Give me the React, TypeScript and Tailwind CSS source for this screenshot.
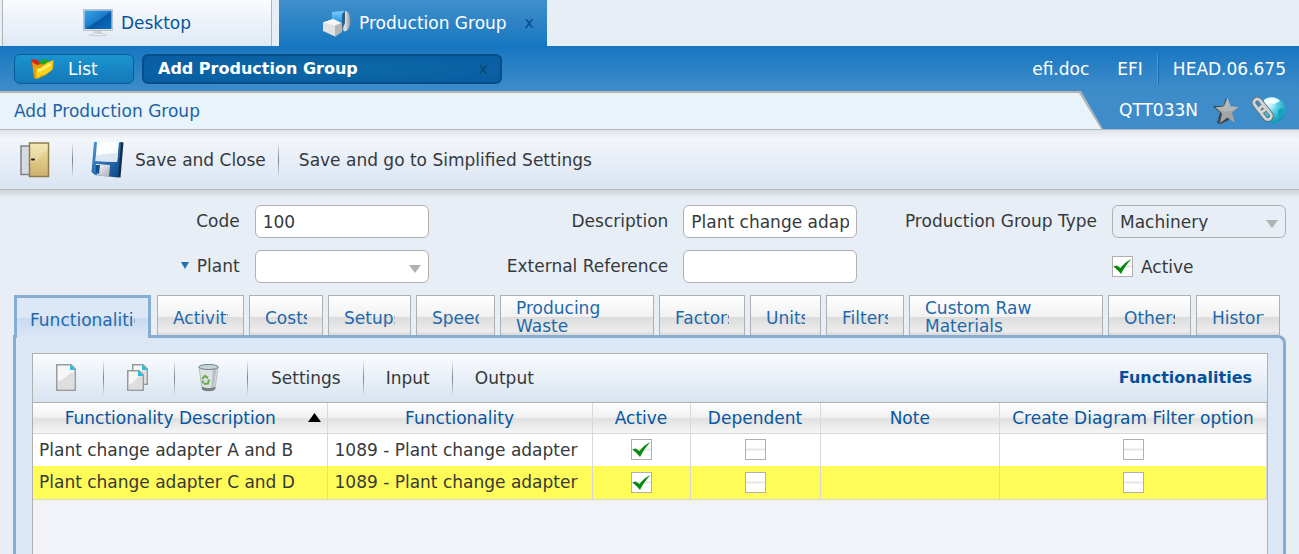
import React, { useState } from "react";

interface RowData {
  description: string;
  functionality: string;
  active: boolean;
  dependent: boolean;
  note: string;
  diagramFilter: boolean;
}

const rows: RowData[] = [
  {
    description: "Plant change adapter A and B",
    functionality: "1089 - Plant change adapter",
    active: true,
    dependent: false,
    note: "",
    diagramFilter: false,
  },
  {
    description: "Plant change adapter C and D",
    functionality: "1089 - Plant change adapter",
    active: true,
    dependent: false,
    note: "",
    diagramFilter: false,
  },
];

const tabs = [
  { label: "Functionalities", width: "w-[137px]" },
  { label: "Activity", width: "w-[87px]" },
  { label: "Costs", width: "w-[74px]" },
  { label: "Setups", width: "w-[83px]" },
  { label: "Speed", width: "w-[79px]" },
  { label: "Producing Waste", width: "w-[154px]", wrap: true },
  { label: "Factors", width: "w-[86px]" },
  { label: "Units", width: "w-[71px]" },
  { label: "Filters", width: "w-[78px]" },
  { label: "Custom Raw Materials", width: "w-[194px]", wrap: true },
  { label: "Others", width: "w-[83px]" },
  { label: "History", width: "w-[84px]" },
];

function MonitorIcon() {
  return (
    <svg width="30" height="28" viewBox="0 0 30 28" aria-hidden="true">
      <defs>
        <linearGradient id="screen" x1="0" y1="0" x2="1" y2="1">
          <stop offset="0" stopColor="#3aa5ea" />
          <stop offset="0.5" stopColor="#1a7cc9" />
          <stop offset="0.55" stopColor="#0857a5" />
          <stop offset="1" stopColor="#0a6fc0" />
        </linearGradient>
      </defs>
      <ellipse cx="15" cy="26" rx="10" ry="1.5" fill="#d3d8df" />
      <path d="M11 21h8l-.6 4.5h-6.800z" fill="#cfd3d8" />
      <path d="M10 24.500h10.500l1 2H9z" fill="#f3f3f3" stroke="#b9bcc0" strokeWidth=".5" />
      <rect x=".5" y=".5" width="29" height="21" fill="#dfe3e7" stroke="#bcc3ca" />
      <rect x="1.500" y="1.500" width="27" height="18.500" fill="url(#screen)" />
    </svg>
  );
}

function MachineIcon() {
  return (
    <svg width="28" height="27" viewBox="0 0 28 27" aria-hidden="true">
      <defs>
        <linearGradient id="dial" x1="0" y1="0" x2="1" y2="0">
          <stop offset="0" stopColor="#5c6166" />
          <stop offset="0.45" stopColor="#e3e5e7" />
          <stop offset="1" stopColor="#8d9195" />
        </linearGradient>
        <linearGradient id="cube" x1="0" y1="0" x2="0" y2="1">
          <stop offset="0" stopColor="#7cd0fb" />
          <stop offset="1" stopColor="#1a93e2" />
        </linearGradient>
      </defs>
      <path d="M22 1c4 0 5.500 6 5.500 10s-2 10-6 10.500l-4-3 2-15z" fill="url(#dial)" />
      <path d="M9 2l12-1-1 11-11 1z" fill="url(#cube)" />
      <path d="M19 4l3-3v12l-3 6z" fill="#2c5f85" />
      <path d="M0 12.500L10 9l8.500 4v9L12 26.500 0 21z" fill="#e0e1e3" />
      <path d="M0 12.500L10 9l8.500 4L12 15.500z" fill="#f6f6f7" />
      <path d="M12 15.500l6.500-2.500v9L12 26.500z" fill="#b4b6ba" />
    </svg>
  );
}

function FoldersIcon() {
  return (
    <svg width="23" height="20" viewBox="0 0 23 20" aria-hidden="true">
      <path d="M0 .5h6l3 4-3 8-3 1z" fill="#d9261b" />
      <path d="M9 2l5-2 3 1 1 3-5 5-5-1z" fill="#27a51f" />
      <path d="M1 3l5 3 5-1 2 1 4-3 6-2-1 9-7 6-9 4-3-1z" fill="#e59a10" />
      <path d="M5 9.500c5 0 6-2.500 10-5l7-3-1 9c-5 5-10 5-15.500 9z" fill="#f9d619" />
      <path d="M7 10.500c5-1 8-5 13.500-6.500l-1 3C14 9 12 12 7 13z" fill="#fdf07a" />
    </svg>
  );
}

function StarIcon() {
  return (
    <svg width="27" height="27" viewBox="0 0 27 27" aria-hidden="true">
      <path d="M14 0l-2.500 9H.500l7.500 6.500L5 26l4 1 8-4z" fill="#3c4850" />
      <path
        d="M15.500 1l3 8.500 8 .5-6.500 5.500 3 10.500-7.500-5.500L8 26l2-9.500-6.500-6 8.500-1z"
        fill="#a3a4a5"
      />
      <path d="M15.500 1l3 8.500 8 .5-6.500 4-8 .5-8.500-4 8.500-1z" fill="#b5b6b7" />
    </svg>
  );
}

function GlobeLinkIcon() {
  return (
    <svg width="34" height="28" viewBox="0 0 34 28" aria-hidden="true">
      <defs>
        <radialGradient id="globe" cx=".4" cy=".3" r=".75">
          <stop offset="0" stopColor="#e2fbff" />
          <stop offset="0.4" stopColor="#56cfe4" />
          <stop offset="1" stopColor="#0791b4" />
        </radialGradient>
      </defs>
      <circle cx="20.500" cy="14" r="13" fill="url(#globe)" />
      <path d="M26 14l4-2 2 3-2 5-4 1zM16 20l6 2-3 3-5-1z" fill="#17a3c0" />
      <path d="M12 4c5-4 12-3 16 1l-6 3-5-1-4 3z" fill="#f2ffff" />
      <g transform="rotate(52 11 13)" fill="none">
        <rect x="-1" y="10" width="14" height="7" rx="3.500" stroke="#59666b" strokeWidth="4.500" />
        <rect x="8" y="10" width="15" height="7" rx="3.500" stroke="#59666b" strokeWidth="4.500" />
        <rect x="-1" y="10" width="14" height="7" rx="3.500" stroke="#cfd3d4" strokeWidth="3" />
        <rect x="8" y="10" width="15" height="7" rx="3.500" stroke="#cfd3d4" strokeWidth="3" />
      </g>
    </svg>
  );
}

function DoorIcon() {
  return (
    <svg width="30" height="36" viewBox="0 0 30 36" aria-hidden="true">
      <defs>
        <linearGradient id="door" x1="0" y1="0" x2="0" y2="1">
          <stop offset="0" stopColor="#f3e3a4" />
          <stop offset="1" stopColor="#cdb06b" />
        </linearGradient>
      </defs>
      <rect x="1" y="4" width="9" height="28.500" fill="#d5dbe3" stroke="#808389" strokeWidth="1.500" />
      <rect x="9.500" y="1" width="19" height="33.500" fill="url(#door)" stroke="#8e7c4c" strokeWidth="1.500" />
      <path d="M28 8c-8 3-7 10-17.500 13V2H28z" fill="#fff" opacity=".2" />
      <rect x="11" y="16.500" width="4" height="2" rx="1" fill="#231f10" />
    </svg>
  );
}

function FloppyIcon() {
  return (
    <svg width="33" height="37" viewBox="0 0 33 37" aria-hidden="true">
      <defs>
        <linearGradient id="floppy" x1="0" y1="0" x2="1" y2="1">
          <stop offset="0" stopColor="#4e97d0" />
          <stop offset="1" stopColor="#08468c" />
        </linearGradient>
        <linearGradient id="shutter" x1="0" y1="0" x2="1" y2="1">
          <stop offset="0" stopColor="#ffffff" />
          <stop offset="1" stopColor="#a8abb0" />
        </linearGradient>
      </defs>
      <path d="M29 1l3.500.5-3 35-4-.5z" fill="#172c45" />
      <path d="M3 1l27 .5-3 35L4 34 .5 31z" fill="url(#floppy)" />
      <path d="M6 1h22l-2 20-21.500-1z" fill="#fcfdfe" />
      <path d="M5 14l22-2-1 9-21.500-1z" fill="#dce7f2" />
      <path d="M5 23l14 1-1 12-12-2z" fill="url(#shutter)" />
      <path d="M5 24h4l-1 9-3-1z" fill="#124f91" />
    </svg>
  );
}

function Page({ x, y, w, h }: { x: number; y: number; w: number; h: number }) {
  return (
    <g transform={`translate(${x} ${y})`}>
      <path
        d={`M.75.75H${w - 5}L${w - 0.75} 5V${h - 0.75}H.75z`}
        fill="#f6f6f6"
        stroke="#97999b"
        strokeWidth="1.500"
      />
      <path d={`M2 ${h - 2}V${h / 2 + 4}C${w / 2} ${h / 2 + 2} ${w / 2} ${h / 2 - 4} ${w - 2} ${h / 2 - 5}V${h - 2}z`} fill="#dedede" />
      <path d={`M${w - 6} .5L${w - 0.5} 6H${w - 6}z`} fill="#22bfe2" />
    </g>
  );
}

function NewIcon() {
  return (
    <svg width="21" height="28" viewBox="0 0 21 28" aria-hidden="true">
      <Page x={0} y={0} w={20} h={27} />
    </svg>
  );
}

function CopyIcon() {
  return (
    <svg width="22" height="28" viewBox="0 0 22 28" aria-hidden="true">
      <Page x={5} y={0} w={16} h={21} />
      <Page x={0} y={6} w={17} h={21} />
    </svg>
  );
}

function BinIcon() {
  return (
    <svg width="21" height="28" viewBox="0 0 21 28" aria-hidden="true">
      <path d="M1 3l3 22c3 2.500 10 2.500 13 0L20 3z" fill="#dde3e5" stroke="#aab3b7" strokeWidth=".8" />
      <path d="M4 22.500c4 2 9 2 13.300 0L17 25.500c-3 2-10 2-13 0z" fill="#777f82" />
      <path d="M15 5l3.500-1-2.500 19-3 1z" fill="#b8c0c3" />
      <ellipse cx="10.500" cy="3" rx="9.700" ry="2.500" fill="#c4d5dc" stroke="#727b80" />
      <path
        d="M4 15l3-3 3 2M11 15.500l-1 4-4 .5M4.500 16.500l1 3"
        fill="none"
        stroke="#6fae55"
        strokeWidth="2.200"
      />
    </svg>
  );
}

function Separator() {
  return (
    <span
      aria-hidden="true"
      className="h-9 w-px shrink-0 bg-gradient-to-b from-transparent via-[#7d8288] to-transparent"
    />
  );
}

function Checkbox({ id, label, defaultChecked }: { id?: string; label?: string; defaultChecked: boolean }) {
  return (
    <span className="inline-grid align-middle">
      <input
        id={id}
        type="checkbox"
        aria-label={label}
        defaultChecked={defaultChecked}
        className="peer size-[21px] appearance-none border border-[#b0b0b0] bg-white bg-gradient-to-b from-white from-40% via-[#e6e6e6] via-50% to-white to-60% [grid-area:1/1]"
      />
      <svg
        viewBox="0 0 21 21"
        aria-hidden="true"
        className="pointer-events-none hidden size-[21px] peer-checked:block [grid-area:1/1]"
      >
        <path d="M1.500 10.500l3-1 4 2.500C11.500 8 15 5 19.500 3 15 7.500 12 12 9 18 7 15 4 13 1.500 10.500z" fill="#048a0c" />
      </svg>
    </span>
  );
}

const fieldClass = "h-[33px] w-[174px] shrink-0 rounded-md border border-[#b0b0b0] px-[7px]";

function SelectField({ id, options, fill }: { id: string; options: string[]; fill: string }) {
  return (
    <span className="grid items-center">
      <select id={id} className={`${fieldClass} ${fill} appearance-none [grid-area:1/1]`}>
        {options.map((o) => (
          <option key={o}>{o}</option>
        ))}
      </select>
      <svg
        width="12"
        height="8"
        viewBox="0 0 12 8"
        aria-hidden="true"
        className="pointer-events-none mr-2 mt-1 justify-self-end [grid-area:1/1]"
      >
        <path d="M0 0h12L6 8z" fill="#b1b1b1" />
      </svg>
    </span>
  );
}

function Field({ id, label, marker, children }: { id: string; label: string; marker?: boolean; children: React.ReactNode }) {
  return (
    <div className="flex items-center justify-end gap-[15px]">
      <label htmlFor={id} className="flex items-center gap-2 whitespace-nowrap pb-[2px]">
        {marker && (
          <svg width="8" height="7" viewBox="0 0 8 7" aria-hidden="true">
            <path d="M0 0h8L4 7z" fill="#2270ae" />
          </svg>
        )}
        {label}
      </label>
      {children}
    </div>
  );
}

export default function App() {
  const [activeTab, setActiveTab] = useState("Functionalities");

  return (
    <div className="flex min-h-screen flex-col bg-[#e7eef5] font-['Verdana','DejaVu_Sans',sans-serif] text-[17px] leading-[18px] text-[#36393c]">
      {/* Window tabs */}
      <nav className="flex h-[46px] gap-[7px] pl-[2px]">
        <button className="flex w-[270px] items-center justify-center gap-2 border-x border-[#b4b4b4] bg-gradient-to-b from-[#fafbfe] to-[#dfe9f5] text-[#07539c]">
          <MonitorIcon />
          Desktop
        </button>
        <div className="flex w-[268px] items-center bg-gradient-to-b from-[#3f8fcb] to-[#1477bf] pl-[44px] pr-[13px] text-white">
          <button className="flex flex-1 items-center gap-2 whitespace-nowrap">
            <MachineIcon />
            Production Group
          </button>
          <button aria-label="Close Production Group" className="text-base text-[#0b4f83]">
            x
          </button>
        </div>
      </nav>

      <header className="bg-gradient-to-b from-[#1376c0] to-[#3e8dca] to-[45px] text-white">
        <div className="flex h-[45px] items-center gap-2 pl-[14px] pr-[13px]">
          <button className="flex h-[30px] w-[120px] items-center gap-[14px] rounded-md border border-[#0b5c95] bg-gradient-to-b from-[#1b95cf] to-[#1478b8] pl-4">
            <FoldersIcon />
            List
          </button>
          <div className="flex h-[30px] w-[360px] items-center justify-between rounded-md border-2 border-[#084c88] bg-[radial-gradient(ellipse_at_center,#0c6aa6,#095ca2)] pl-[14px] pr-3">
            <span className="text-base font-bold">Add Production Group</span>
            <button aria-label="Close Add Production Group" className="text-base text-[#0b4871]">
              x
            </button>
          </div>
          <div className="ml-auto flex items-center">
            <span>efi.doc</span>
            <span className="ml-7">EFI</span>
            <span className="mx-[14px] h-[30px] w-[2px] border-l border-[#4b9ad6] bg-[#1569ac]" />
            <span>HEAD.06.675</span>
          </div>
        </div>
        <div className="flex h-[38px]">
          <div className="flex-1 bg-[#b2b5b8] pr-[2px] pt-[2px] [clip-path:polygon(0_0,calc(100%-22px)_0,100%_100%,0_100%)]">
            <h1 className="flex h-9 items-center bg-[#e8f3fa] pl-[14px] text-[#1d62a5] [clip-path:polygon(0_0,calc(100%-22px)_0,100%_100%,0_100%)]">
              Add Production Group
            </h1>
          </div>
          <div className="flex w-[196px] items-center justify-between pl-4 pr-[13px]">
            <span>QTT033N</span>
            <button aria-label="Add to favourites">
              <StarIcon />
            </button>
            <button aria-label="Copy link">
              <GlobeLinkIcon />
            </button>
          </div>
        </div>
      </header>

      {/* Page toolbar */}
      <div className="flex h-[61px] items-center border-y border-[#b3b9c2] bg-gradient-to-b from-[#dfe3e7] via-[#f3f6fb] via-15% to-[#d9e4f1] pl-5">
        <button aria-label="Exit">
          <DoorIcon />
        </button>
        <span className="ml-[22px] flex">
          <Separator />
        </span>
        <button className="ml-[18px] mr-3 flex items-center gap-[11px]">
          <FloppyIcon />
          Save and Close
        </button>
        <Separator />
        <button className="ml-5">Save and go to Simplified Settings</button>
      </div>
      <div className="h-2 bg-gradient-to-b from-[#cfd4d9] to-[#e7eef5]" />

      <form className="grid grid-cols-3 gap-y-3 pb-3 pr-[13px] pt-[7px]">
        <Field id="code" label="Code">
          <input id="code" defaultValue="100" className={`${fieldClass} bg-white`} />
        </Field>
        <Field id="description" label="Description">
          <input id="description" defaultValue="Plant change adapter" className={`${fieldClass} bg-white`} />
        </Field>
        <Field id="type" label="Production Group Type">
          <SelectField id="type" options={["Machinery"]} fill="bg-[#e7eef5]" />
        </Field>
        <Field id="plant" label="Plant" marker>
          <SelectField id="plant" options={[""]} fill="bg-white" />
        </Field>
        <Field id="reference" label="External Reference">
          <input id="reference" className={`${fieldClass} bg-white`} />
        </Field>
        <div className="flex items-center justify-end">
          <div className="flex w-[174px] items-center gap-2">
            <Checkbox id="active" defaultChecked />
            <label htmlFor="active">Active</label>
          </div>
        </div>
      </form>

      <div className="flex flex-1 flex-col px-[13px]">
        <div role="tablist" className="flex h-10 items-start gap-[5px] pl-px">
          {tabs.map((tab) => {
            const selected = tab.label === activeTab;
            return (
              <button
                key={tab.label}
                role="tab"
                aria-selected={selected}
                onClick={() => setActiveTab(tab.label)}
                className={`${tab.width} shrink-0 text-left text-[#1f69ab] ${
                  selected
                    ? "z-10 mr-px h-[43px] border-x-[3px] border-t-[3px] border-[#87add0] bg-[linear-gradient(#dde8f6_50%,#c8dbf1_50%,#dbe7f6)] px-[13px]"
                    : "h-10 border border-b-0 border-[#b0b0b0] bg-[linear-gradient(#fff,#f1f1f1_54%,#dcdcdc_54%,#ececec_90%,#d8d8d8)] px-[15px]"
                }`}
              >
                <span className={`block overflow-hidden ${tab.wrap ? "pt-[2px]" : "whitespace-nowrap pt-1"}`}>
                  {tab.label}
                </span>
              </button>
            );
          })}
        </div>

        <div
          role="tabpanel"
          className="flex flex-1 flex-col rounded-tr-lg border-[3px] border-b-0 border-[#87add0] bg-[#dbe7f5] pl-4 pr-[15px] pt-[15px]"
        >
          <section className="flex-1 border border-b-0 border-[#b0b0b0] bg-[#f2f3f8]">
            <div className="flex h-[49px] items-center border-b border-[#b0b0b0] bg-gradient-to-b from-[#f9fcfe] to-[#d9e4f1] pl-[23px] pr-[15px]">
              <button aria-label="New">
                <NewIcon />
              </button>
              <span className="ml-[26px] mr-[23px] flex">
                <Separator />
              </span>
              <button aria-label="Duplicate">
                <CopyIcon />
              </button>
              <span className="ml-[25px] mr-[23px] flex">
                <Separator />
              </span>
              <button aria-label="Delete">
                <BinIcon />
              </button>
              <span className="ml-7 mr-[23px] flex">
                <Separator />
              </span>
              <button>Settings</button>
              <span className="mx-[22px] flex">
                <Separator />
              </span>
              <button>Input</button>
              <span className="mx-[22px] flex">
                <Separator />
              </span>
              <button>Output</button>
              <h2 className="ml-auto text-base font-bold text-[#05509b]">Functionalities</h2>
            </div>

            <table className="w-full table-fixed border-collapse">
              <thead>
                <tr className="h-[30px] bg-[linear-gradient(#fff,#f0f0f0_50%,#e0e0e0_50%,#f6f6f6)] text-[#07569f] [&>th]:border-b [&>th]:border-r [&>th]:border-[#d8d8d8] [&>th]:font-normal">
                  <th aria-sort="ascending" className="w-[294px]">
                    <div className="flex items-center pr-[6px]">
                      <span className="flex-1">Functionality Description</span>
                      <svg width="13" height="9" viewBox="0 0 13 9" aria-hidden="true">
                        <path d="M0 9L6.500 0 13 9z" fill="#000" />
                      </svg>
                    </div>
                  </th>
                  <th className="w-[265px]">Functionality</th>
                  <th className="w-[98px]">Active</th>
                  <th className="w-[130px]">Dependent</th>
                  <th>Note</th>
                  <th className="w-[267px]">Create Diagram Filter option</th>
                </tr>
              </thead>
              <tbody>
                {rows.map((row, i) => (
                  <tr
                    key={row.description}
                    className={`h-[33px] [&>td]:border-r [&>td]:border-[#d8d8d8] ${
                      i === 1 ? "border-b border-[#d8d8d8] bg-[#fffb57]" : "bg-white"
                    }`}
                  >
                    <td className="whitespace-nowrap pl-[6px]">{row.description}</td>
                    <td className="whitespace-nowrap pl-[7px]">{row.functionality}</td>
                    <td className="text-center">
                      <Checkbox label="Active" defaultChecked={row.active} />
                    </td>
                    <td className="text-center">
                      <Checkbox label="Dependent" defaultChecked={row.dependent} />
                    </td>
                    <td>{row.note}</td>
                    <td className="text-center">
                      <Checkbox label="Create Diagram Filter option" defaultChecked={row.diagramFilter} />
                    </td>
                  </tr>
                ))}
              </tbody>
            </table>
          </section>
        </div>
      </div>
    </div>
  );
}
